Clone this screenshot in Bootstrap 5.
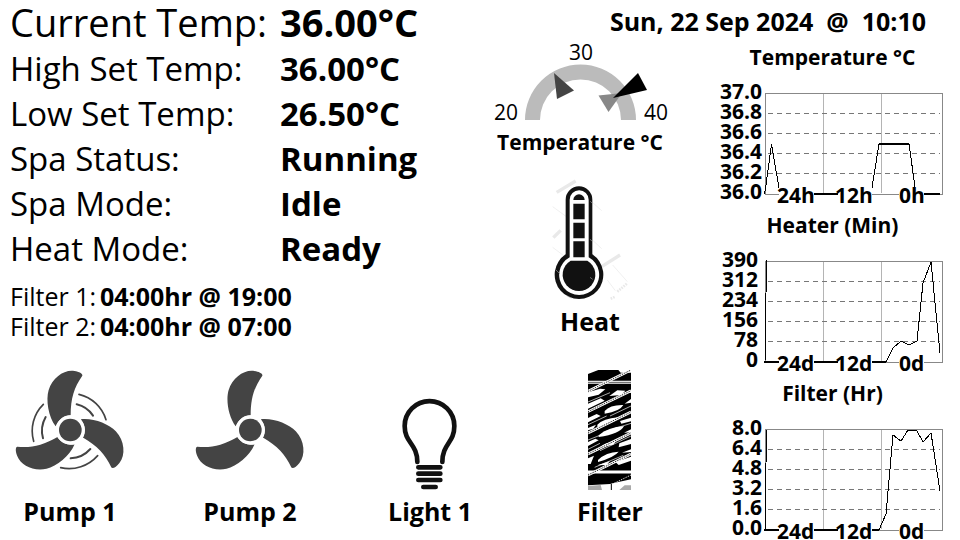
<!DOCTYPE html>
<html lang="en">
<head>
<meta charset="utf-8">
<meta name="viewport" content="width=device-width, initial-scale=1">
<title>Spa status</title>
<link href="https://cdn.jsdelivr.net/npm/bootstrap@5.3.0/dist/css/bootstrap.min.css" rel="stylesheet">
<style>
  body { font-family: "Open Sans", "Noto Sans", sans-serif; color: #000; background: #fff; }
  .spa-page { display: grid; grid-template-columns: 480fr 200fr 280fr; grid-template-rows: 42px minmax(323px, auto) auto; }
  .readings { grid-area: 1 / 1 / 3 / 2; padding-left: 10px; }
  .clock { grid-area: 1 / 2 / 2 / 4; padding-right: 34px; font-size: 25px; line-height: 42px; }
  .dials { grid-area: 2 / 2 / 3 / 3; }
  .history { grid-area: 2 / 3 / 4 / 4; padding-left: 25px; gap: 6px; }
  .equipment { grid-area: 3 / 1 / 4 / 3; }
  .reading { display: grid; grid-template-columns: 270px auto; font-size: 33px; line-height: 45px; }
  .reading-main { font-size: 38px; line-height: 44px; padding-bottom: 2px; }
  .reading dt, .cycle dt { font-weight: 400; }
  .reading dd, .cycle dd { font-weight: 700; margin: 0; }
  .cycles { margin-top: 10px; font-size: 25px; line-height: 30px; }
  .cycle { display: grid; grid-template-columns: 90px auto; }
  .panel-title { font-size: 21px; line-height: 30px; font-weight: 700; margin: 0; }
  .device-name { font-size: 25px; line-height: 30px; font-weight: 700; }
  .heat { padding: 13px 0 0 20px; }
  svg { display: block; max-width: 100%; }
  svg text { font-size: 21px; }
  .chart text { font-weight: 700; }
  .chart .ylab { text-anchor: end; }
  .frame { fill: none; stroke: #888; }
  .dash { fill: none; stroke: #777; stroke-dasharray: 5 4; shape-rendering: crispEdges; }
  .vert { fill: none; stroke: #b4b4b4; }
  .trace { fill: none; stroke: #000; stroke-width: 1; shape-rendering: crispEdges; }
  .base { fill: none; stroke: #000; stroke-width: 2; }
  .blank { fill: #fff; }
</style>
</head>
<body>
<svg width="0" height="0" class="position-absolute" aria-hidden="true">
  <defs>
    <path id="blade" d="M152 184 C130 155 122 105 131 75 C142 38 178 13 208 18 C222 20 234 26 232 32 C207 68 197 100 197 151 C178 152 160 164 152 184Z"/>
    <g id="fan" fill="#444">
      <use href="#blade"/>
      <use href="#blade" transform="rotate(120 196 195)"/>
      <use href="#blade" transform="rotate(240 196 195)"/>
      <circle cx="196" cy="195" r="44" fill="#fff"/>
      <circle cx="196" cy="195" r="34"/>
    </g>
    <g id="grid">
      <path class="vert" d="M118.500 21V121M176.500 21V121"/>
      <path class="dash" d="M63 41.500H235M63 61.500H235M63 81.500H235M63 101.500H235"/>
      <rect class="frame" x="60.500" y="21.500" width="177" height="101"/>
    </g>
    <g id="gaps" class="blank">
      <rect x="74" y="115" width="35" height="17"/>
      <rect x="133" y="115" width="34" height="17"/>
      <rect x="194" y="115" width="25" height="17"/>
    </g>
  </defs>
</svg>

<main class="spa-page">
  <section class="readings">
    <dl class="m-0">
      <div class="reading reading-main"><dt>Current Temp:</dt><dd>36.00°C</dd></div>
      <div class="reading"><dt>High Set Temp:</dt><dd>36.00°C</dd></div>
      <div class="reading"><dt>Low Set Temp:</dt><dd>26.50°C</dd></div>
      <div class="reading"><dt>Spa Status:</dt><dd>Running</dd></div>
      <div class="reading"><dt>Spa Mode:</dt><dd>Idle</dd></div>
      <div class="reading"><dt>Heat Mode:</dt><dd>Ready</dd></div>
    </dl>
    <dl class="cycles mb-0">
      <div class="cycle"><dt>Filter 1:</dt><dd>04:00hr @ 19:00</dd></div>
      <div class="cycle"><dt>Filter 2:</dt><dd>04:00hr @ 07:00</dd></div>
    </dl>
  </section>

  <div class="clock text-end fw-bold text-nowrap">Sun, 22 Sep 2024&nbsp; @ &nbsp;10:10</div>

  <section class="dials text-center">
    <svg class="mx-auto" width="200" height="85" viewBox="0 0 200 85" role="img" aria-label="Temperature gauge">
      <path d="M45 78A55.500 55.500 0 0 1 156 78H141A40.500 40.500 0 0 0 60 78Z" fill="#bbb"/>
      <path d="M74 31L94 48.500L77 57Z" fill="#444"/>
      <path d="M118.500 53.500L142 51L128.500 70Z" fill="#888"/>
      <path d="M158 31L167 48L133 56Z" fill="#000"/>
      <text x="101" y="18" text-anchor="middle">30</text>
      <text x="26" y="78" text-anchor="middle">20</text>
      <text x="176" y="78" text-anchor="middle">40</text>
    </svg>
    <h2 class="panel-title">Temperature °C</h2>
    <div class="heat">
      <svg class="mx-auto" width="120" height="136" viewBox="0 0 360 408" aria-hidden="true">
        <g stroke="#e9e9e9" fill="none">
          <path d="M80 67L137 33M70 203L92 181M215 290L270 255" stroke-width="10"/>
          <path d="M68 110L112 142M68 232L112 265M185 95L215 122M185 208L215 236M248 285L292 335M232 330L256 362" stroke-width="2"/>
          <path d="M262 365L292 340M242 386L256 380" stroke-width="8" stroke-dasharray="5 3"/>
        </g>
        <path d="M107 89A40 40 0 0 1 187 89V253A73 73 0 1 1 107 253Z" fill="#111"/>
        <path d="M119 89A28.500 28.500 0 0 1 176 89V262A60 60 0 1 1 119 262Z" fill="#fff"/>
        <path d="M130 90A17 17 0 0 1 164 90ZM130 101H164V148H130ZM130 158H164V205H130ZM130 214H164V262H130Z" fill="#111"/>
        <path d="M122 272H172A49 49 0 1 1 122 272Z" fill="#111"/>
        <path d="M181 94L186 99M180 208L186 213M180 322L188 328M78 300L90 312M112 378L124 384" stroke="#999" stroke-width="2"/>
      </svg>
      <div class="device-name">Heat</div>
    </div>
  </section>

  <section class="history d-flex flex-column text-center">
    <div>
      <h2 class="panel-title">Temperature °C</h2>
      <svg class="chart" width="255" height="132" viewBox="0 0 255 132" role="img" aria-label="Temperature, last 24 hours">
        <use href="#grid"/>
        <path class="trace" d="M59.500 122L61 113L66.500 72L75 122M166 122L174 72M204 72L211 122"/>
        <path class="base" d="M75 122H166M174 72H204M211 122H235"/>
        <use href="#gaps"/>
        <g class="ylab"><text x="57" y="27">37.0</text><text x="57" y="47">36.8</text><text x="57" y="67">36.6</text><text x="57" y="87">36.4</text><text x="57" y="107">36.2</text><text x="57" y="127">36.0</text></g>
        <text x="72" y="131">24h</text><text x="130" y="131">12h</text><text x="194" y="131">0h</text>
      </svg>
    </div>
    <div>
      <h2 class="panel-title">Heater (Min)</h2>
      <svg class="chart" width="255" height="132" viewBox="0 0 255 132" role="img" aria-label="Heater minutes, last 24 days">
        <use href="#grid"/>
        <path class="trace" d="M61.500 20L60 122M181 122L188 108L196 101L204 105L212 101L218 43L226 22L235 113"/>
        <path class="base" d="M59 122H181"/>
        <use href="#gaps"/>
        <g class="ylab"><text x="53" y="27">390</text><text x="53" y="47">312</text><text x="53" y="67">234</text><text x="53" y="87">156</text><text x="53" y="107">78</text><text x="53" y="127">0</text></g>
        <text x="72" y="131">24d</text><text x="130" y="131">12d</text><text x="194" y="131">0d</text>
      </svg>
    </div>
    <div>
      <h2 class="panel-title">Filter (Hr)</h2>
      <svg class="chart" width="255" height="132" viewBox="0 0 255 132" role="img" aria-label="Filter hours, last 24 days">
        <use href="#grid"/>
        <path class="trace" d="M61.500 22L60 122M174 122L181 106L188 27L196 33L203 22L212 23L218 34L226 25L235 83"/>
        <path class="base" d="M59 122H174"/>
        <use href="#gaps"/>
        <g class="ylab"><text x="57" y="27">8.0</text><text x="57" y="47">6.4</text><text x="57" y="67">4.8</text><text x="57" y="87">3.2</text><text x="57" y="107">1.6</text><text x="57" y="127">0.0</text></g>
        <text x="72" y="131">24d</text><text x="130" y="131">12d</text><text x="194" y="131">0d</text>
      </svg>
    </div>
  </section>

  <section class="equipment d-flex justify-content-between text-center">
    <div>
      <svg width="140" height="131" viewBox="-15 0 420 393" aria-hidden="true">
        <g fill="none" stroke="#444" stroke-linecap="round">
          <path d="M222 88A112 112 0 0 1 303 164M115 118A112 112 0 0 0 86 229M167 308A114 114 0 0 0 278 272" stroke-width="5"/>
          <path d="M215 118A80 80 0 0 1 264 152M122 156A84 84 0 0 0 114 220M197 280A84 84 0 0 0 256 252" stroke-width="6"/>
        </g>
        <use href="#fan"/>
      </svg>
      <div class="device-name">Pump 1</div>
    </div>
    <div>
      <svg width="140" height="131" viewBox="-15 0 420 393" aria-hidden="true"><use href="#fan"/></svg>
      <div class="device-name">Pump 2</div>
    </div>
    <div>
      <svg width="140" height="131" viewBox="-60 -45 420 393" aria-hidden="true">
        <g fill="none" stroke="#111" stroke-width="14" stroke-linecap="round">
          <path d="M112 246C112 190 74 190 74 138A74.500 74.500 0 0 1 223 138C223 190 187 190 187 246"/>
          <path d="M115 262H181M115 281H181M115 300H181M130 321H167"/>
        </g>
      </svg>
      <div class="device-name">Light 1</div>
    </div>
    <div>
      <svg width="140" height="131" viewBox="-60 15 420 393" aria-hidden="true">
        <clipPath id="cartridge"><rect x="84" y="30" width="129" height="360"/></clipPath>
        <g clip-path="url(#cartridge)">
          <rect x="84" y="30" width="129" height="360" fill="#000"/>
          <path d="M84 30H115L84 42ZM175 30H213V38H182Z" fill="#fff"/>
          <g fill="#fff">
            <path d="M84 97L120 86L136 88L116 104L84 112ZM148 108L172 91L196 92L184 105ZM202 96L213 90V99Z"/>
            <path d="M84 131L122 115L134 122L84 146ZM134 153Q150 134 190 135Q180 154 134 161ZM194 131L213 117V128Z"/>
            <path d="M84 174L110 162L122 168L84 187ZM112 194Q130 176 174 172Q166 188 112 203ZM180 183L213 173V184L184 191Z"/>
            <path d="M84 204L108 194L100 206L84 211ZM116 226Q144 202 192 198Q180 222 116 231ZM192 218L213 208V217Z"/>
            <path d="M84 246L106 236L116 241L84 258ZM120 262Q136 246 166 246L160 254ZM178 250L213 237V252L176 262Z"/>
            <path d="M84 295L102 287L92 312H84ZM114 300Q138 276 176 275Q164 291 114 306ZM186 278L213 268V276ZM112 316L150 303L140 315ZM166 306L213 290V302L176 315Z"/>
          </g>
          <path d="M84 126L150 98M150 168L213 138M84 194L140 168M130 216L213 190M84 240L150 214M120 272L213 228M84 268L120 250M104 322L190 286" stroke="#fff" stroke-width="2"/>
          <path d="M84 67H213M84 336H213" stroke="#fff" stroke-width="9"/>
          <path d="M84 67H213" stroke="#000" stroke-width="2"/>
          <path d="M84 94L213 30M84 155L213 92M84 219L213 156M84 282L213 219M84 345L213 282" stroke="#fff" stroke-width="8"/>
          <path d="M84 94L213 30M84 155L213 92M84 219L213 156M84 282L213 219M84 345L213 282" stroke="#000" stroke-width="3" stroke-dasharray="3 3"/>
          <path d="M84 376L150 372L165 368L213 358V390H84Z" fill="#fff"/>
          <path d="M156 373L213 345" stroke="#fff" stroke-width="3" stroke-dasharray="3 3"/>
          <path d="M84 378L122 375L126 390H84ZM178 390L194 376H213V390Z" fill="#aaa"/>
          <path d="M154 372V390" stroke="#000" stroke-width="3"/>
        </g>
      </svg>
      <div class="device-name">Filter</div>
    </div>
  </section>
</main>
<script src="https://cdn.jsdelivr.net/npm/bootstrap@5.3.0/dist/js/bootstrap.bundle.min.js"></script>
</body>
</html>
